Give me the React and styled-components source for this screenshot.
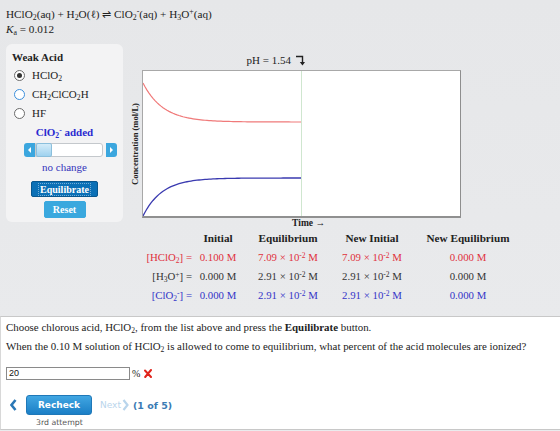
import React from 'react';
import styled, { createGlobalStyle } from 'styled-components';

const GlobalStyle = createGlobalStyle`
  html, body {
    margin: 0;
    padding: 0;
    background: #e8e9eb;
  }
  body {
    font-family: "Liberation Serif", "Times New Roman", serif;
    color: #222;
  }
`;

const Page = styled.div`
  width: 560px;
  height: 431px;
  overflow: hidden;
  background: linear-gradient(to bottom, #e6e7e9 0%, #eaebed 100%);
  display: flex;
  flex-direction: column;
`;

const TopArea = styled.div`
  height: 316px;
  display: flex;
  flex-direction: column;
`;

const Equation = styled.div`
  padding: 7px 6px 0;
  font-size: 11.2px;
  line-height: 15px;
  color: #222;
  white-space: nowrap;
`;

const Sub = styled.sub`
  font-size: 70%;
  line-height: 0;
  vertical-align: -0.25em;
`;

const Sup = styled.sup`
  font-size: 70%;
  line-height: 0;
  vertical-align: 0.45em;
`;

const MainRow = styled.div`
  margin-top: 7px;
  display: flex;
  align-items: flex-start;
`;

const ControlPanel = styled.div`
  margin-left: 6px;
  width: 117px;
  height: 178px;
  box-sizing: border-box;
  padding: 6px 0 0 0;
  background: #f3f3f4;
  border-radius: 6px;
  display: flex;
  flex-direction: column;
`;

const PanelTitle = styled.div`
  padding-left: 6px;
  font-weight: bold;
  font-size: 11px;
  line-height: 14px;
`;

const RadioList = styled.div`
  margin-top: 1.5px;
  display: flex;
  flex-direction: column;
`;

const RadioRow = styled.div`
  height: 19px;
  display: flex;
  align-items: center;
  padding-left: 8px;
  font-size: 11px;
`;

const RadioDot = styled.span`
  width: 9px;
  height: 9px;
  border-radius: 50%;
  background: #fff;
  border: ${(p) => (p.$hover ? '1.3px solid #3c8fdc' : '1px solid #6b6b6b')};
  display: flex;
  align-items: center;
  justify-content: center;
  margin-right: 7px;
  &::after {
    content: '';
    width: 5px;
    height: 5px;
    border-radius: 50%;
    background: ${(p) => (p.$checked ? '#333' : 'transparent')};
  }
`;

const AddedLabel = styled.div`
  margin-top: 2.5px;
  text-align: center;
  font-weight: bold;
  font-size: 11px;
  line-height: 14px;
  color: #2a2ad0;
`;

const Slider = styled.div`
  margin: 4px 0 0 18px;
  width: 93px;
  height: 14px;
  display: flex;
`;

const SliderButton = styled.div`
  width: 11px;
  background: #3ba6de;
  border-radius: ${(p) => (p.$side === 'left' ? '3px 0 0 3px' : '0 3px 3px 0')};
  display: flex;
  align-items: center;
  justify-content: center;
  &::after {
    content: '';
    border-top: 3px solid transparent;
    border-bottom: 3px solid transparent;
    ${(p) => (p.$side === 'left' ? 'border-right: 3px solid #fff;' : 'border-left: 3px solid #fff;')}
  }
`;

const SliderTrack = styled.div`
  flex: 1;
  margin: 0 3px 0 0;
  background: #fff;
  border: 1px solid #c4c8cc;
  border-radius: 0 3px 3px 0;
  box-sizing: border-box;
  display: flex;
`;

const SliderThumb = styled.div`
  width: 14px;
  margin: -1px 0;
  background: linear-gradient(#d4ecf9, #9fd2ef);
  border: 1px solid #8bbfdc;
  border-radius: 2px;
`;

const ChangeText = styled.div`
  margin-top: 3px;
  text-align: center;
  font-size: 11px;
  line-height: 14px;
  color: #3333bb;
`;

const ActionButton = styled.div`
  align-self: center;
  margin-top: ${(p) => (p.$primary ? '7px' : '4px')};
  width: ${(p) => (p.$primary ? '67px' : '42px')};
  height: ${(p) => (p.$primary ? '16px' : '17px')};
  box-sizing: border-box;
  background: ${(p) => (p.$primary ? '#0b70b6' : '#3aa8de')};
  border: 1px solid ${(p) => (p.$primary ? '#08578f' : '#3aa8de')};
  border-radius: 2px;
  color: #fff;
  font-weight: bold;
  font-size: 10px;
  display: flex;
  align-items: center;
  justify-content: center;
  span {
    padding: 0 1px;
    outline: ${(p) => (p.$primary ? '1px dotted rgba(200, 225, 245, 0.55)' : 'none')};
    line-height: 11px;
  }
`;

const GraphColumn = styled.div`
  margin-left: 4px;
  display: flex;
  flex-direction: column;
`;

const PhRow = styled.div`
  margin-top: 9px;
  height: 14px;
  width: 336px;
  display: flex;
  align-items: center;
  justify-content: flex-end;
  padding-right: 158px;
  box-sizing: border-box;
  font-size: 11px;
  gap: 5px;
`;

const ChartRow = styled.div`
  margin-top: 3px;
  display: flex;
`;

const YLabel = styled.div`
  width: 15px;
  height: 148px;
  display: flex;
  align-items: center;
  justify-content: center;
  writing-mode: vertical-rl;
  transform: rotate(180deg);
  font-weight: bold;
  font-size: 8.5px;
  white-space: nowrap;
`;

const PlotBox = styled.div`
  width: 319px;
  height: 148px;
  box-sizing: border-box;
  background: #fff;
  border: 1px solid #a8a8a8;
  border-right-color: #8e8e8e;
  border-bottom: 2px solid #909090;
  svg {
    display: block;
  }
`;

const TimeLabel = styled.div`
  margin-left: 15px;
  width: 319px;
  text-align: center;
  font-weight: bold;
  font-size: 9.5px;
  line-height: 10px;
  padding-left: 14px;
  box-sizing: border-box;
`;

const DataTable = styled.div`
  margin: 0.5px 0 0 9px;
  display: grid;
  grid-template-columns: 58px 48px 92px 76px 116px;
  grid-auto-rows: 19px;
  align-items: center;
  font-size: 11px;
  white-space: nowrap;
`;

const toneColor = { red: '#e0303c', dark: '#333', blue: '#3434c8' };

const Cell = styled.div`
  text-align: ${(p) => (p.$label ? 'right' : 'center')};
  padding-right: ${(p) => (p.$label ? '2px' : '0')};
  font-weight: ${(p) => (p.$head ? 'bold' : 'normal')};
  color: ${(p) => (p.$tone ? toneColor[p.$tone] : '#222')};
  font-size: ${(p) => (p.$head ? '11.2px' : '10.8px')};
`;

const QuestionPanel = styled.div`
  height: 114px;
  box-sizing: border-box;
  background: #fff;
  border-top: 1px solid #c8c8c8;
  border-left: 1px solid #d8d8d8;
  border-bottom: 1px solid #c8c8c8;
  padding: 3px 0 0 5px;
  display: flex;
  flex-direction: column;
`;

const QText = styled.div`
  margin-top: ${(p) => p.$gap || '0'};
  font-size: 10.9px;
  line-height: 14px;
  white-space: nowrap;
  b {
    font-weight: bold;
  }
`;

const AnswerRow = styled.div`
  margin-top: 14px;
  display: flex;
  align-items: center;
  height: 13px;
`;

const AnswerInput = styled.div`
  width: 124px;
  height: 13px;
  box-sizing: border-box;
  border: 1px solid #8a8a8a;
  font-family: "Liberation Sans", Arial, sans-serif;
  font-size: 9px;
  line-height: 11px;
  padding-left: 2px;
  color: #111;
`;

const Percent = styled.span`
  margin-left: 2px;
  font-size: 10px;
`;

const NavRow = styled.div`
  margin-top: 15px;
  display: flex;
  align-items: center;
  height: 20px;
  font-family: "DejaVu Sans", Verdana, sans-serif;
`;

const RecheckButton = styled.div`
  margin-left: 9px;
  width: 66px;
  height: 20px;
  box-sizing: border-box;
  border-radius: 3px;
  background: linear-gradient(#41a6e2, #1b7fc6);
  border: 1px solid #1f78b8;
  color: #fff;
  font-weight: bold;
  font-size: 9px;
  display: flex;
  align-items: center;
  justify-content: center;
`;

const NextLink = styled.span`
  margin-left: 8px;
  display: flex;
  align-items: center;
  gap: 1px;
  color: #b9d5ec;
  font-size: 9px;
`;

const Counter = styled.span`
  margin-left: 4px;
  color: #3a7bb4;
  font-weight: bold;
  font-size: 9.5px;
`;

const AttemptNote = styled.div`
  margin: 3px 0 0 30px;
  font-family: "DejaVu Sans", Verdana, sans-serif;
  font-size: 7.8px;
  line-height: 10px;
  color: #555;
`;

const decay = (start, end, tau, width) => {
  const pts = [];
  for (let x = 0; x <= width; x += 2) {
    const y = end + (start - end) * Math.exp(-x / tau);
    pts.push(`${x},${y.toFixed(2)}`);
  }
  return 'M' + pts.join(' L');
};

const Chart = () => (
  <svg width="317" height="145" viewBox="0 0 317 145">
    <line x1="158.5" y1="0" x2="158.5" y2="145" stroke="#cfe6cf" strokeWidth="1" />
    <path d={decay(12, 51, 20, 158)} fill="none" stroke="#f07a7a" strokeWidth="1.2" />
    <path d={decay(145, 107, 19, 158)} fill="none" stroke="#3a3ab0" strokeWidth="1.3" />
  </svg>
);

const PhArrow = () => (
  <svg width="9" height="11" viewBox="0 0 9 11">
    <path d="M0 1.5 H6.5 V9" fill="none" stroke="#222" strokeWidth="1.4" />
    <path d="M3.8 7 L6.5 10.5 L9 7 Z" fill="#222" />
  </svg>
);

const WrongMark = () => (
  <svg width="8" height="9" viewBox="0 0 8 9" style={{ marginLeft: 4 }}>
    <path d="M1 1.5 L7 8 M7 1 L1.2 8" stroke="#e0241c" strokeWidth="2" strokeLinecap="round" />
  </svg>
);

const Chevron = ({ color, w = 7, h = 12, sw = 2.6, dir = 'left' }) => (
  <svg width={w} height={h} viewBox={`0 0 ${w} ${h}`}>
    <path
      d={dir === 'left' ? `M${w - 1.5} 1 L1.5 ${h / 2} L${w - 1.5} ${h - 1}` : `M1.5 1 L${w - 1.5} ${h / 2} L1.5 ${h - 1}`}
      fill="none"
      stroke={color}
      strokeWidth={sw}
    />
  </svg>
);

const ClO2 = () => (
  <>
    [ClO<Sub>2</Sub>
    <Sup>-</Sup>] =
  </>
);

const rows = [
  {
    tone: 'red',
    label: (
      <>
        [HClO<Sub>2</Sub>] =
      </>
    ),
    values: ['0.100 M', 'exp', 'exp', '0.000 M'],
  },
  {
    tone: 'dark',
    label: (
      <>
        [H<Sub>3</Sub>O<Sup>+</Sup>] =
      </>
    ),
    values: ['0.000 M', 'exp', 'exp', '0.000 M'],
  },
  { tone: 'blue', label: <ClO2 />, values: ['0.000 M', 'exp', 'exp', '0.000 M'] },
];

const Sci = ({ tone }) => (
  <>
    {tone === 'red' ? '7.09' : '2.91'} × 10<Sup>-2</Sup> M
  </>
);

export default function App() {
  return (
    <Page>
      <GlobalStyle />
      <TopArea>
        <Equation>
          <div>
            HClO<Sub>2</Sub>(aq) + H<Sub>2</Sub>O(ℓ) ⇌ ClO<Sub>2</Sub>
            <Sup>-</Sup>(aq) + H<Sub>3</Sub>O<Sup>+</Sup>(aq)
          </div>
          <div>
            <i>K</i>
            <Sub>a</Sub> = 0.012
          </div>
        </Equation>

        <MainRow>
          <ControlPanel>
            <PanelTitle>Weak Acid</PanelTitle>
            <RadioList>
              <RadioRow>
                <RadioDot $checked />
                <span>
                  HClO<Sub>2</Sub>
                </span>
              </RadioRow>
              <RadioRow>
                <RadioDot $hover />
                <span>
                  CH<Sub>2</Sub>ClCO<Sub>2</Sub>H
                </span>
              </RadioRow>
              <RadioRow>
                <RadioDot />
                <span>HF</span>
              </RadioRow>
            </RadioList>
            <AddedLabel>
              ClO<Sub>2</Sub>
              <Sup>-</Sup> added
            </AddedLabel>
            <Slider>
              <SliderButton $side="left" />
              <SliderTrack>
                <SliderThumb />
              </SliderTrack>
              <SliderButton $side="right" />
            </Slider>
            <ChangeText>no change</ChangeText>
            <ActionButton $primary>
              <span>Equilibrate</span>
            </ActionButton>
            <ActionButton>
              <span>Reset</span>
            </ActionButton>
          </ControlPanel>

          <GraphColumn>
            <PhRow>
              <span>pH = 1.54</span>
              <PhArrow />
            </PhRow>
            <ChartRow>
              <YLabel>Concentration (mol/L)</YLabel>
              <PlotBox>
                <Chart />
              </PlotBox>
            </ChartRow>
            <TimeLabel>Time →</TimeLabel>
            <DataTable>
              <Cell />
              <Cell $head>Initial</Cell>
              <Cell $head>Equilibrium</Cell>
              <Cell $head>New Initial</Cell>
              <Cell $head>New Equilibrium</Cell>
              {rows.map((r, i) => (
                <React.Fragment key={i}>
                  <Cell $label $tone={r.tone}>
                    {r.label}
                  </Cell>
                  {r.values.map((v, j) => (
                    <Cell key={j} $tone={r.tone}>
                      {v === 'exp' ? <Sci tone={r.tone} /> : v}
                    </Cell>
                  ))}
                </React.Fragment>
              ))}
            </DataTable>
          </GraphColumn>
        </MainRow>
      </TopArea>

      <QuestionPanel>
        <QText>
          Choose chlorous acid, HClO<Sub>2</Sub>, from the list above and press the <b>Equilibrate</b> button.
        </QText>
        <QText $gap="5px">
          When the 0.10 M solution of HClO<Sub>2</Sub> is allowed to come to equilibrium, what percent of the acid
          molecules are ionized?
        </QText>
        <AnswerRow>
          <AnswerInput>20</AnswerInput>
          <Percent>%</Percent>
          <WrongMark />
        </AnswerRow>
        <NavRow>
          <span style={{ marginLeft: 4, display: 'flex' }}>
            <Chevron color="#2b78b6" />
          </span>
          <RecheckButton>Recheck</RecheckButton>
          <NextLink>
            Next
            <Chevron color="#b9d5ec" w={7} h={12} sw={2.2} dir="right" />
          </NextLink>
          <Counter>(1 of 5)</Counter>
        </NavRow>
        <AttemptNote>3rd attempt</AttemptNote>
      </QuestionPanel>
    </Page>
  );
}
